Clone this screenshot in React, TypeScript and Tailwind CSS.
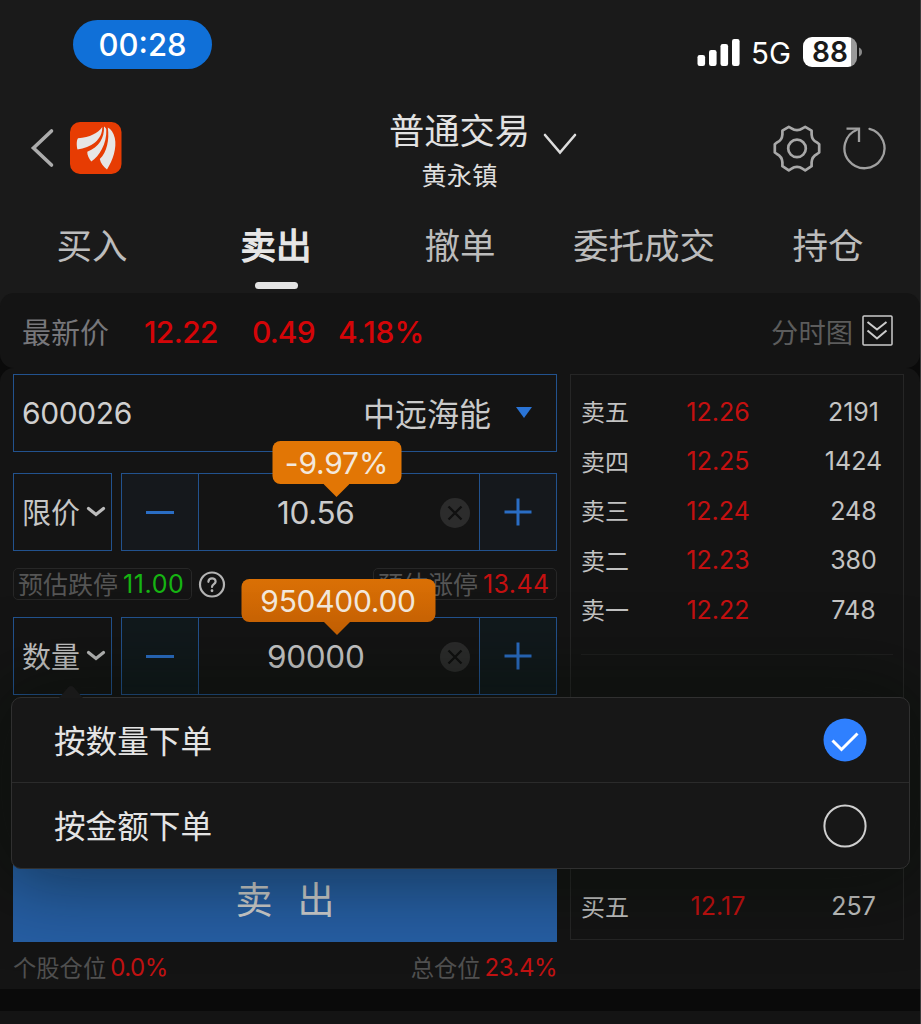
import type { ReactNode } from "react";

const zh = "font-['Noto_Sans_CJK_SC',sans-serif] whitespace-nowrap leading-none";
const num = "font-[Inter,sans-serif] whitespace-nowrap leading-none";

function StatusBar() {
  return (
    <div className="flex h-[88px] items-start">
      <div className={`${num} ml-[73px] mt-5 flex h-[49px] w-[139px] items-center justify-center rounded-full bg-[#1070d8] text-[31px] font-medium text-white`}>
        00:28
      </div>
      <svg className="ml-[485px] mt-[38px]" width="44" height="29" viewBox="0 0 44 29" fill="#fff">
        <rect x="0.5" y="17" width="7.6" height="11" rx="2.2" />
        <rect x="12" y="12" width="7.6" height="16" rx="2.2" />
        <rect x="23.5" y="6" width="7.6" height="22" rx="2.2" />
        <rect x="35" y="1" width="7.6" height="27" rx="2.2" />
      </svg>
      <span className={`${num} ml-[10px] mt-[39px] w-[42px] text-[29.5px] text-white`}>5G</span>
      <div className="ml-[10px] mt-[37px] flex items-center">
        <div className={`${num} flex h-[30px] w-[54px] items-center justify-center rounded-[9px] bg-[linear-gradient(90deg,#fff_88%,#9a9a9a_88%)] text-[28px] font-semibold text-[#1a1a1a]`}>
          88
        </div>
        <svg className="ml-[2px]" width="4" height="10" viewBox="0 0 4 10" fill="#8a8a8a">
          <path d="M0 0.5C4 2 4 8 0 9.500Z" />
        </svg>
      </div>
    </div>
  );
}

function Header() {
  return (
    <div className="flex h-[120px] items-start">
      <svg className="ml-[30px] mt-[39px]" width="26" height="42" viewBox="0 0 26 42" fill="none" stroke="#acacac" strokeWidth="3.600" strokeLinecap="round">
        <path d="M21.500 4L3.500 21L21.500 38" strokeLinejoin="miter" />
      </svg>
      <svg className="ml-[14px] mt-[34px]" width="52" height="52" viewBox="0 0 52 52">
        <rect width="51.500" height="52" rx="10" fill="#e73c03" />
        <g fill="#e6e6e6">
          <path d="M32.300 5C28 11 20 15.500 8 16.200C6.300 18.500 6.600 24 7.500 27.500C21 25.500 32.500 18 32.300 5Z" />
          <path d="M34 4.500C34.500 16 29 25 17.300 29.800C17 33 19 37 21.300 39.500C29 34.500 37 22 36.300 7.500C36 6 35 5 34 4.500Z" />
          <path d="M37.800 5.500C39.500 18 37 30 29.800 37C30.500 41 33.500 45 37 47.500C43 38 47 26 44.800 16C43.500 10.500 41 7 37.800 5.500Z" />
        </g>
      </svg>
      <div className="ml-[267px] flex w-[141px] flex-col items-center pt-[23px]">
        <span className={`${zh} text-[35.3px] text-[#e2e2e2]`}>普通交易</span>
        <span className={`${zh} mt-[16px] text-[25.3px] text-[#dedede]`}>黄永镇</span>
      </div>
      <svg className="ml-[12px] mt-[43px]" width="36" height="26" viewBox="0 0 36 26" fill="none" stroke="#dcdcdc" strokeWidth="2.600" strokeLinecap="round">
        <path d="M3 4L18 21.500L33 4" />
      </svg>
      <svg className="ml-[194px] mt-[36px]" width="50" height="50" viewBox="0 0 50 50" fill="none" stroke="#a8a8a8" strokeWidth="2.700" strokeLinejoin="round">
        <path d="M16.800 2.900L20 4.600C22.500 6.600 27.500 6.600 30 4.600L33.200 2.900L39.600 6.700V10.500C39.800 13.800 42.100 17.300 45.100 18.500L47.200 20.300V28.500L45.100 30C42.100 31.500 39.800 35 39.600 38.300V42.200L33.200 46.300L30 44.400C27.500 42.300 22.500 42.300 20 44.400L16.800 46.300L10.400 42.200V38.300C10.200 35 7.900 31.500 4.900 30L2.800 28.500V20.300L4.900 18.500C7.900 17.300 10.200 13.800 10.400 10.500V6.700Z" />
        <circle cx="25" cy="24.400" r="8.800" />
      </svg>
      <svg className="ml-[20px] mt-[36px]" width="46" height="48" viewBox="0 0 46 48" fill="none" stroke="#a0a0a0" strokeWidth="2.300">
        <path d="M27.500 4.900A20 20 0 1 1 15 5.700" strokeLinecap="round" />
        <path d="M4.500 4.700H17V18" />
      </svg>
    </div>
  );
}

function Tabs() {
  const tabs = ["买入", "卖出", "撤单", "委托成交", "持仓"];
  return (
    <div className="grid h-[85px] w-[920px] grid-cols-5">
      {tabs.map((t) => (
        <div key={t} className="flex flex-col items-center pt-[18px]">
          <span className={`${zh} text-[35.5px] ${t === "卖出" ? "text-[#e6e6e6] [-webkit-text-stroke:1.3px_#e6e6e6]" : "text-[#bcbcbc]"}`}>{t}</span>
          {t === "卖出" && <div className="mt-[20px] h-[7px] w-[43px] rounded-full bg-[#e4e4e4]" />}
        </div>
      ))}
    </div>
  );
}

function QuoteBar() {
  return (
    <div className="flex h-[75px] items-center rounded-[14px] bg-[#141414] pl-[22px] pr-[27px] pt-0.5 text-[#d40508]">
      <span className={`${zh} w-[122px] text-[29px] text-[#77777b]`}>最新价</span>
      <span className={`${num} w-[108px] text-[30px] font-medium tracking-[-0.6px]`}>12.22</span>
      <span className={`${num} w-[86px] text-[30px] font-medium tracking-[-0.9px]`}>0.49</span>
      <span className={`${num} text-[30px] font-medium`}>4.18%</span>
      <span className={`${zh} ml-auto text-[27.3px] text-[#5c5c5c]`}>分时图</span>
      <svg className="ml-[9px] mb-[3px]" width="31" height="31" viewBox="0 0 31 31" fill="none" stroke="#cccccc">
        <rect x="1" y="1" width="29" height="29" rx="1" strokeWidth="1.500" />
        <path d="M5.500 7L15 14.500L24.500 7M5.500 15.500L15 23.500L24.500 15.500" strokeWidth="2" />
      </svg>
    </div>
  );
}

function ModeBox({ label }: { label: string }) {
  return (
    <div className="flex h-[78px] w-[99px] items-center border-[1.5px] border-[#22528e] pl-2">
      <span className={`${zh} pb-0.5 text-[29px] text-[#c6c6c6]`}>{label}</span>
      <svg className="ml-[6px]" width="20" height="14" viewBox="0 0 20 14" fill="none" stroke="#bcbcbc" strokeWidth="3.200" strokeLinecap="round">
        <path d="M2.500 3.500L10 9.500L17.500 3.500" />
      </svg>
    </div>
  );
}

function Stepper({ value, tip, tipStyle, boxStyle, arrowStyle, tone }: { value: string; tip: string; tipStyle: string; boxStyle: string; arrowStyle: string; tone: string }) {
  return (
    <div className="relative ml-[8.5px] flex h-[78px] flex-1 border border-[#22528e]">
      <div className={`flex w-[77px] items-center justify-center border-r border-[#22528e] ${tone}`}>
        <div className="h-[3px] w-7 bg-[#2a6dc4]" />
      </div>
      <div className="flex flex-1 items-center pr-[9px] pt-0.5">
        <span className={`${num} flex-1 pr-[7px] text-center text-[31.5px] tracking-[-0.3px] text-[#cbcbcb]`}>{value}</span>
        <svg width="30" height="30" viewBox="0 0 30 30">
          <circle cx="15" cy="15" r="15" fill="#2c2c2c" />
          <path d="M8.500 8.500L21.500 21.500M21.500 8.500L8.500 21.500" stroke="#101010" strokeWidth="2.300" />
        </svg>
      </div>
      <div className={`flex w-[77px] items-center justify-center border-l border-[#22528e] ${tone}`}>
        <svg width="28" height="28" viewBox="0 0 28 28" stroke="#2a6dc4" strokeWidth="3">
          <path d="M0.500 14H27.500M14 0.500V27.500" />
        </svg>
      </div>
      <div className={`absolute left-[215px] flex -translate-x-1/2 flex-col items-center ${tipStyle}`}>
        <div className={`${num} flex h-[43px] w-full items-center justify-center rounded-[8px] text-[30px] text-[#f3e8dc] ${boxStyle}`}>{tip}</div>
        <svg className={arrowStyle} width="26" height="13" viewBox="0 0 26 13">
          <path d="M0 0H26L13 13Z" />
        </svg>
      </div>
    </div>
  );
}

function Limit({ label, children }: { label: string; children: ReactNode }) {
  return (
    <div className="flex h-8 items-center rounded-[5px] border border-[#272727] px-1">
      <span className={`${zh} pb-0.5 text-[25px] text-[#555555]`}>{label}</span>
      {children}
    </div>
  );
}

function OrderForm() {
  return (
    <div className="flex w-[544px] flex-col">
      <div className="flex h-[78px] items-center border-[1.5px] border-[#22528e] pl-2 pr-[24px]">
        <span className={`${num} text-[30px] tracking-[-0.4px] text-[#cfcfcf]`}>600026</span>
        <span className={`${zh} ml-auto pb-0.5 text-[32px] text-[#cacaca]`}>中远海能</span>
        <svg className="ml-[25px] mb-0.5" width="16" height="11" viewBox="0 0 16 11" fill="#2a74d6">
          <path d="M0 0H16L8 11Z" />
        </svg>
      </div>
      <div className="mt-[21px] flex">
        <ModeBox label="限价" />
        <Stepper value="10.56" tip="-9.97%" tipStyle="w-[129px] -top-[33px]" boxStyle="bg-[#e27605] tracking-[-0.2px]" arrowStyle="fill-[#e27605]" tone="bg-[#15181c]" />
      </div>
      <div className="mt-[17px] flex items-center">
        <Limit label="预估跌停">
          <span className={`${num} ml-[5px] w-[64px] pt-px text-[25px] tracking-[0.6px] text-[#16b412]`}>11.00</span>
        </Limit>
        <svg className="ml-[6px]" width="28" height="28" viewBox="0 0 28 28" fill="none" stroke="#b4b4b4" strokeWidth="2.200" strokeLinecap="round">
          <circle cx="14" cy="14.500" r="12" />
          <path d="M10.400 11.800C10.600 7 17.800 7.300 17.600 11.600C17.500 14.200 14 14 14 17" />
          <path d="M14 20.700V20.800" strokeWidth="2.800" />
        </svg>
        <div className="ml-auto">
          <Limit label="预估涨停">
            <span className={`${num} ml-[5px] w-[69px] pt-px text-[25px] tracking-[0.4px] text-[#c41010]`}>13.44</span>
          </Limit>
        </div>
      </div>
      <div className="mt-[17px] flex">
        <ModeBox label="数量" />
        <Stepper value="90000" tip="950400.00" tipStyle="w-[194px] -top-[39px]" boxStyle="translate-x-[1.5px] bg-[linear-gradient(#da7005,#cb6404)] tracking-[-0.3px]" arrowStyle="fill-[#cb6404]" tone="bg-[#11191c]" />
      </div>
      <div className="mt-[163px] flex h-[84px] items-center justify-center gap-[25px] bg-[#265ea3] pb-1">
        <span className={`${zh} text-[37px] text-[#d0d0d0]`}>卖</span>
        <span className={`${zh} text-[37px] text-[#d0d0d0]`}>出</span>
      </div>
      <div className="flex h-[47px] items-center justify-between pt-[6px] text-[#c01212]">
        <div className="flex items-center">
          <span className={`${zh} pb-0.5 text-[23.3px] text-[#505050]`}>个股仓位</span>
          <span className={`${num} ml-[4px] text-[24px] tracking-[-0.5px]`}>0.0%</span>
        </div>
        <div className="flex items-center">
          <span className={`${zh} pb-0.5 text-[23.3px] text-[#505050]`}>总仓位</span>
          <span className={`${num} ml-[4px] text-[24px] tracking-[-0.5px]`}>23.4%</span>
        </div>
      </div>
    </div>
  );
}

function BookRow({ side, price, qty }: { side: string; price: string; qty: string }) {
  return (
    <div className="flex h-[49.5px] items-center">
      <span className={`${zh} w-[76px] shrink-0 pl-[10px] pb-px text-[24px] text-[#c2c2c2]`}>{side}</span>
      <span className={`${num} w-[142px] shrink-0 pt-px text-center text-[25px] text-[#c41010]`}>{price}</span>
      <span className={`${num} ml-[16px] w-[97px] shrink-0 pt-px text-center text-[25px] text-[#c4c4c4]`}>{qty}</span>
    </div>
  );
}

function OrderBook() {
  return (
    <div className="ml-[13px] flex h-[566px] w-[334px] flex-col border border-[#262626] pt-[12px]">
      <BookRow side="卖五" price="12.26" qty="2191" />
      <BookRow side="卖四" price="12.25" qty="1424" />
      <BookRow side="卖三" price="12.24" qty="248" />
      <BookRow side="卖二" price="12.23" qty="380" />
      <BookRow side="卖一" price="12.22" qty="748" />
      <div className="mx-[10px] mt-[19px] h-px bg-[#1f1f1f]" />
      <div className="mt-auto mb-[8px]">
        <BookRow side="买五" price="12.17" qty="257" />
      </div>
    </div>
  );
}

function ModeMenu() {
  return (
    <div className="absolute left-[11px] top-[697px] w-[899px] rounded-[10px] border border-[#303030] bg-[#171717] shadow-[0_0_80px_10px_rgba(4,12,4,0.5)]">
      <svg className="absolute -top-[13px] left-[47px]" width="24" height="13" viewBox="0 0 24 13" fill="#191919">
        <path d="M0 13L9.500 2Q12 0 14.500 2L24 13Z" />
      </svg>
      <div className="flex h-[85px] items-center justify-between border-b border-[#2b2b2b] px-[42px]">
        <span className={`${zh} pb-px text-[31.6px] text-[#e4e4e4]`}>按数量下单</span>
        <svg width="44" height="44" viewBox="0 0 44 44" fill="none">
          <circle cx="22" cy="22" r="21.500" fill="#2f80ff" />
          <path d="M9.500 22.500L18.500 31.500L34.500 15.500" stroke="#fff" strokeWidth="3" />
        </svg>
      </div>
      <div className="flex h-[85px] items-center justify-between px-[42px]">
        <span className={`${zh} pb-px text-[31.6px] text-[#e4e4e4]`}>按金额下单</span>
        <svg width="44" height="44" viewBox="0 0 44 44" fill="none">
          <circle cx="22" cy="22" r="20.600" stroke="#cfcfcf" strokeWidth="2" />
        </svg>
      </div>
    </div>
  );
}

export default function App() {
  return (
    <div className="relative h-[1024px] w-[921px] overflow-hidden border-r border-[#3c3c3c] bg-[#1a1a1a]">
      <StatusBar />
      <Header />
      <Tabs />
      <div className="bg-[linear-gradient(#1a1a1a_20px,#0a0a0a_20px)]">
        <QuoteBar />
        <div className="flex h-[621px] rounded-t-[14px] bg-[#141414] pl-[13px] pt-[6px]">
          <OrderForm />
          <OrderBook />
        </div>
        <div className="h-[22px] bg-[#0a0a0a]" />
        <div className="h-[13px] bg-[#141414]" />
      </div>
      <ModeMenu />
    </div>
  );
}
